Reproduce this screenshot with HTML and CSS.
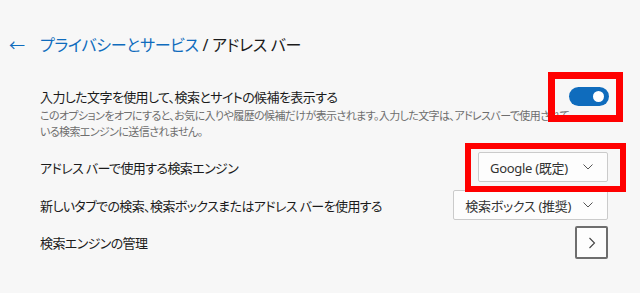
FILE: index.html
```html
<!DOCTYPE html>
<html lang="ja">
<head>
    <meta charset="UTF-8">
    <meta name="viewport" content="width=device-width, initial-scale=1.0">
    <title>アドレス バー</title>
    <link rel="stylesheet" href="styles.css">
</head>
<body>
    <div class="page">
        <div class="header">
            <span class="back">&larr;</span>
            <h1><a href="#">プライバシーとサービス</a> / アドレス バー</h1>
        </div>

        <div class="setting">
            <div class="row row-first">
                <span class="label">入力した文字を使用して、検索とサイトの候補を表示する</span>
                <span class="toggle"><span class="knob"></span></span>
            </div>
            <p class="desc">このオプションをオフにすると、お気に入りや履歴の候補だけが表示されます。入力した文字は、アドレスバーで使用されて<br>いる検索エンジンに送信されません。</p>
        </div>

        <div class="row row-select">
            <span class="label">アドレス バーで使用する検索エンジン</span>
            <button class="select select-engine">Google (既定)<svg class="chev" width="10" height="6" viewBox="0 0 10 6"><path d="M0.5 0.5 L5 5 L9.5 0.5" fill="none" stroke="#555" stroke-width="1"/></svg></button>
        </div>

        <div class="row row-select row-tab">
            <span class="label">新しいタブでの検索、検索ボックスまたはアドレス バーを使用する</span>
            <button class="select">検索ボックス (推奨)<svg class="chev" width="10" height="6" viewBox="0 0 10 6"><path d="M0.5 0.5 L5 5 L9.5 0.5" fill="none" stroke="#555" stroke-width="1"/></svg></button>
        </div>

        <div class="row row-manage">
            <span class="label">検索エンジンの管理</span>
            <button class="arrow-btn">
                <svg width="8" height="12" viewBox="0 0 8 12"><path d="M1.5 1 L6.5 6 L1.5 11" fill="none" stroke="#444" stroke-width="1.1"/></svg>
            </button>
        </div>

        <!-- annotation boxes -->
        <div class="mark mark-toggle"></div>
        <div class="mark mark-engine"></div>
    </div>
</body>
</html>
```

FILE: styles.css
```css
body {
    margin: 0;
    padding: 0;
    background: #f7f7f7;
    font-family: "Noto Sans", "Noto Sans CJK JP", sans-serif;
    font-feature-settings: "palt";
    color: #1b1b1b;
}

.page {
    position: relative;
    width: 640px;
    height: 293px;
    padding: 29px 32px 0 40px;
    box-sizing: border-box;
    overflow: hidden;
}

.header {
    height: 30px;
    display: flex;
    align-items: center;
}

.back {
    margin-left: -31px;
    width: 31px;
    color: #0f6cbd;
    font-size: 16px;
}

h1 {
    margin: 0;
    font-size: 16px;
    font-weight: 400;
    letter-spacing: -0.3px;
    color: #1b1b1b;
}

h1 a {
    color: #0f6cbd;
    text-decoration: none;
}

.setting {
    margin-top: 25px;
}

.row {
    display: flex;
    align-items: center;
    justify-content: space-between;
}

.row-first {
    height: 24px;
}

.label {
    font-size: 13px;
    letter-spacing: -0.6px;
}

.toggle {
    width: 40px;
    height: 19px;
    margin-right: -1px;
    border-radius: 10px;
    background: #0f6cbd;
    display: flex;
    align-items: center;
    justify-content: flex-end;
}

.knob {
    width: 11px;
    height: 11px;
    border-radius: 50%;
    background: #fff;
    margin-right: 5px;
}

.desc {
    margin: 0;
    white-space: nowrap;
    font-size: 11px;
    line-height: 16px;
    letter-spacing: -0.6px;
    color: #6e6e6e;
}

.row-select {
    margin-top: 12px;
    height: 30px;
}

.row-tab {
    margin-top: 8px;
}

.select {
    height: 30px;
    padding: 0 14px 0 11px;
    border: 1px solid #cbcbcb;
    border-radius: 2px;
    background: #fdfdfd;
    font-family: inherit;
    font-feature-settings: "palt";
    font-size: 13px;
    letter-spacing: -0.3px;
    white-space: nowrap;
    color: #333;
    display: flex;
    align-items: center;
    justify-content: space-between;
    gap: 12px;
}

.select-engine {
    width: 130px;
}

.row-manage {
    margin-top: 6px;
    height: 33px;
}

.arrow-btn {
    width: 33px;
    height: 33px;
    padding: 0;
    border: 2px solid #6e6e6e;
    border-radius: 2px;
    background: #fdfdfd;
    display: flex;
    align-items: center;
    justify-content: center;
}

.mark {
    position: absolute;
    border: 7px solid #f00;
    box-sizing: border-box;
}

.mark-toggle {
    left: 548px;
    top: 72px;
    width: 75px;
    height: 50px;
}

.mark-engine {
    left: 465px;
    top: 143px;
    width: 161px;
    height: 49px;
    border-width: 6px;
}
```
